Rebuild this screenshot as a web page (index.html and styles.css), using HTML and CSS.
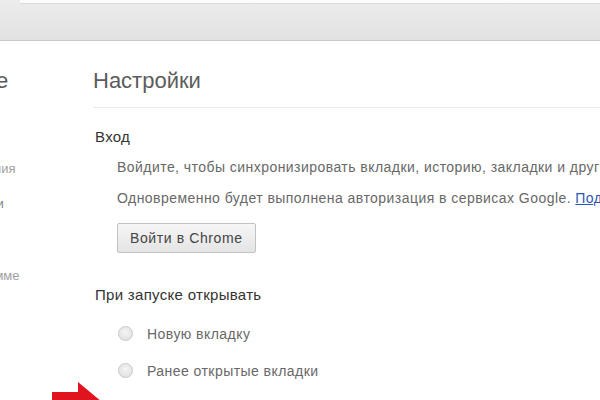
FILE: index.html
```
<!DOCTYPE html>
<html lang="ru">
<head>
<meta charset="utf-8">
<link rel="stylesheet" href="styles.css">
</head>
<body>
<div class="topbar"><div class="search"></div></div>
<div class="page">
  <nav class="sidebar">
    <div class="side-inner">
      <div class="side-title">Chrome</div>
      <div class="side-item">История</div>
      <div class="side-item">Расширения</div>
      <div class="side-item sel">Настройки</div>
      <div class="side-item gap">О программе</div>
    </div>
  </nav>
  <main class="main">
    <h1 class="title">Настройки</h1>
    <section class="section">
      <h3 class="sec-title">Вход</h3>
      <div class="sec-body">
        <p class="line first">Войдите, чтобы синхронизировать вкладки, историю, закладки и другие настройки на всех устройствах.</p>
        <p class="line">Одновременно будет выполнена авторизация в сервисах Google. <a class="link" href="#">Подробнее...</a></p>
        <button class="btn">Войти в Chrome</button>
      </div>
    </section>
    <section class="section s2">
      <h3 class="sec-title">При запуске открывать</h3>
      <div class="sec-body">
        <label class="radio"><span class="dot"></span>Новую вкладку</label>
        <label class="radio"><span class="dot"></span>Ранее открытые вкладки</label>
        <label class="radio"><span class="dot on"></span>Заданные страницы</label>
      </div>
    </section>
  </main>
</div>
<svg class="arrow" width="70" height="40" viewBox="0 0 70 40">
  <polygon points="0,10 26,10 26,0 50,20 26,40 26,30 0,30" fill="#e0141e"/>
</svg>
</body>
</html>
```
FILE: styles.css
```
html, body {
  margin: 0;
  padding: 0;
  width: 600px;
  height: 400px;
  overflow: hidden;
  background: #fff;
  font-family: "Liberation Sans", Arial, sans-serif;
}
.topbar {
  height: 40px;
  background: linear-gradient(#ececec, #e2e2e2);
  border-bottom: 1px solid #c8c8c8;
}
.search {
  margin-left: 20px;
  height: 3px;
  background: #fbfbfb;
  border-bottom: 1px solid #dcdcdc;
}
.page {
  display: flex;
}
.sidebar {
  width: 93px;
  flex: none;
  overflow: hidden;
}
.side-inner {
  margin-left: -60px;
  width: 150px;
  padding-top: 27px;
}
.side-title {
  font-size: 22px;
  color: #5a5a5a;
  height: 26px;
  line-height: 26px;
  margin-left: -10px;
  margin-bottom: 22px;
}
.side-item {
  font-size: 13px;
  color: #a0a0a0;
  height: 35px;
  line-height: 35px;
  white-space: nowrap;
}
.side-item.sel { color: #808080; }
.side-item.gap { margin-top: 37px; }
.main {
  flex: 1;
  min-width: 0;
  white-space: nowrap;
}
.title {
  margin: 0;
  font-weight: normal;
  font-size: 22px;
  color: #5c5c5c;
  padding-top: 27px;
  height: 26px;
  line-height: 26px;
  padding-bottom: 13px;
  border-bottom: 1px solid #eaeaea;
}
.section {
  padding-left: 2px;
}
.sec-title {
  margin: 0;
  font-weight: normal;
  font-size: 15px;
  color: #333;
  height: 20px;
  line-height: 20px;
  margin-top: 19px;
  letter-spacing: 0.3px;
}
.sec-body {
  padding-left: 22px;
}
.line {
  margin: 0;
  font-size: 14px;
  letter-spacing: 0.45px;
  color: #686868;
  height: 31px;
  line-height: 31px;
}
.line.first { margin-top: 5px; }
.link {
  color: #2b56b5;
  text-decoration: underline;
}
.btn {
  display: block;
  margin-top: 9px;
  height: 30px;
  padding: 0 12px;
  font-family: inherit;
  font-size: 14px;
  letter-spacing: 0.6px;
  color: #444;
  background: linear-gradient(#f6f6f6, #e4e4e4);
  border: 1px solid #c2c2c2;
  border-radius: 2px;
}
.s2 .sec-title { margin-top: 32px; }
.s2 .sec-body { padding-top: 10px; }
.radio {
  display: flex;
  align-items: center;
  height: 37px;
  font-size: 14px;
  letter-spacing: 0.45px;
  color: #686868;
}
.dot {
  width: 13px;
  height: 13px;
  border-radius: 50%;
  border: 1px solid #c8c8c8;
  background: radial-gradient(circle at 50% 40%, #f4f4f4, #dcdcdc);
  margin-right: 14px;
  margin-left: 1px;
}
.dot.on {
  border-color: #6c8fd0;
  background: radial-gradient(circle, #4a7bd6 35%, #e8eefa 40%);
}
.arrow {
  position: absolute;
  left: 52px;
  top: 382px;
}
```
